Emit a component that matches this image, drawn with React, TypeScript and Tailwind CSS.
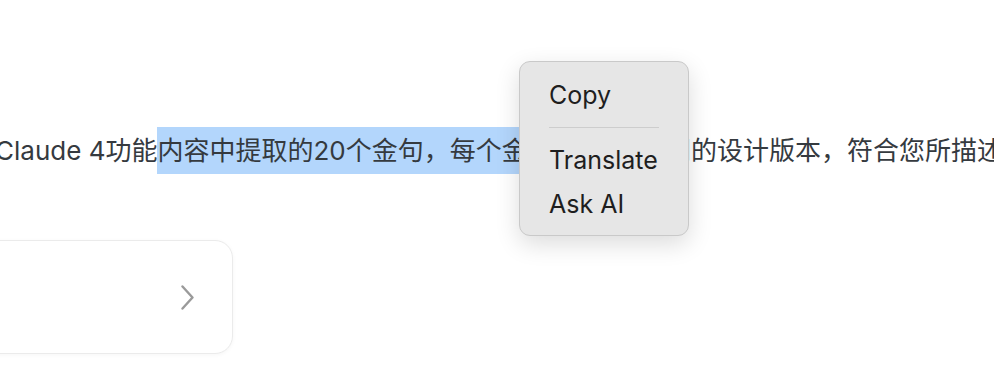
export default function App() {
  return (
    <main
      className="relative w-[994px] h-[378px] overflow-hidden bg-white"
      style={{ fontFamily: 'Inter, "Noto Sans CJK SC", sans-serif' }}
    >
      {/* 선택된 문장 */}
      <div className="pt-[127px] -ml-[5px] whitespace-nowrap text-[26px] leading-[47px] text-[#353a3f]">
        <span>Claude 4功能</span>
        <span className="inline-block bg-[#b3d6fc]">内容中提取的20个金句，每个金句</span>
        <span>都配有 不同的设计版本，符合您所描述的风格</span>
      </div>

      {/* 카드 */}
      <div className="mt-[66px] -ml-[20px] w-[253px] h-[114px] rounded-[18px] border border-[#ebebeb] bg-white shadow-[0_1px_4px_rgba(0,0,0,0.04)] flex items-center justify-end pr-[38px]">
        <svg width="13" height="25" viewBox="0 0 13 25" fill="none">
          <path d="M1.5 1.5 L11.5 12.5 L1.5 23.5" stroke="#9a9a9a" strokeWidth="2.4" strokeLinecap="round" strokeLinejoin="round" />
        </svg>
      </div>

      {/* 컨텍스트 메뉴 */}
      <div className="absolute left-[519px] top-[61px] w-[170px] rounded-[11px] border border-[#c9c9c9] bg-[#e6e6e6] pt-[12px] pb-[8px] shadow-[0_8px_24px_rgba(0,0,0,0.14)]">
        <div className="px-[29px] h-[44px] flex items-center text-[25px] text-[#1e1e1e]">Copy</div>
        <div className="mx-[29px] mt-[9px] mb-[11px] h-px bg-[#cdcdcd]" />
        <div className="px-[29px] h-[44px] flex items-center text-[25px] text-[#1e1e1e]">Translate</div>
        <div className="px-[29px] h-[44px] flex items-center text-[25px] text-[#1e1e1e]">Ask AI</div>
      </div>
    </main>
  )
}
